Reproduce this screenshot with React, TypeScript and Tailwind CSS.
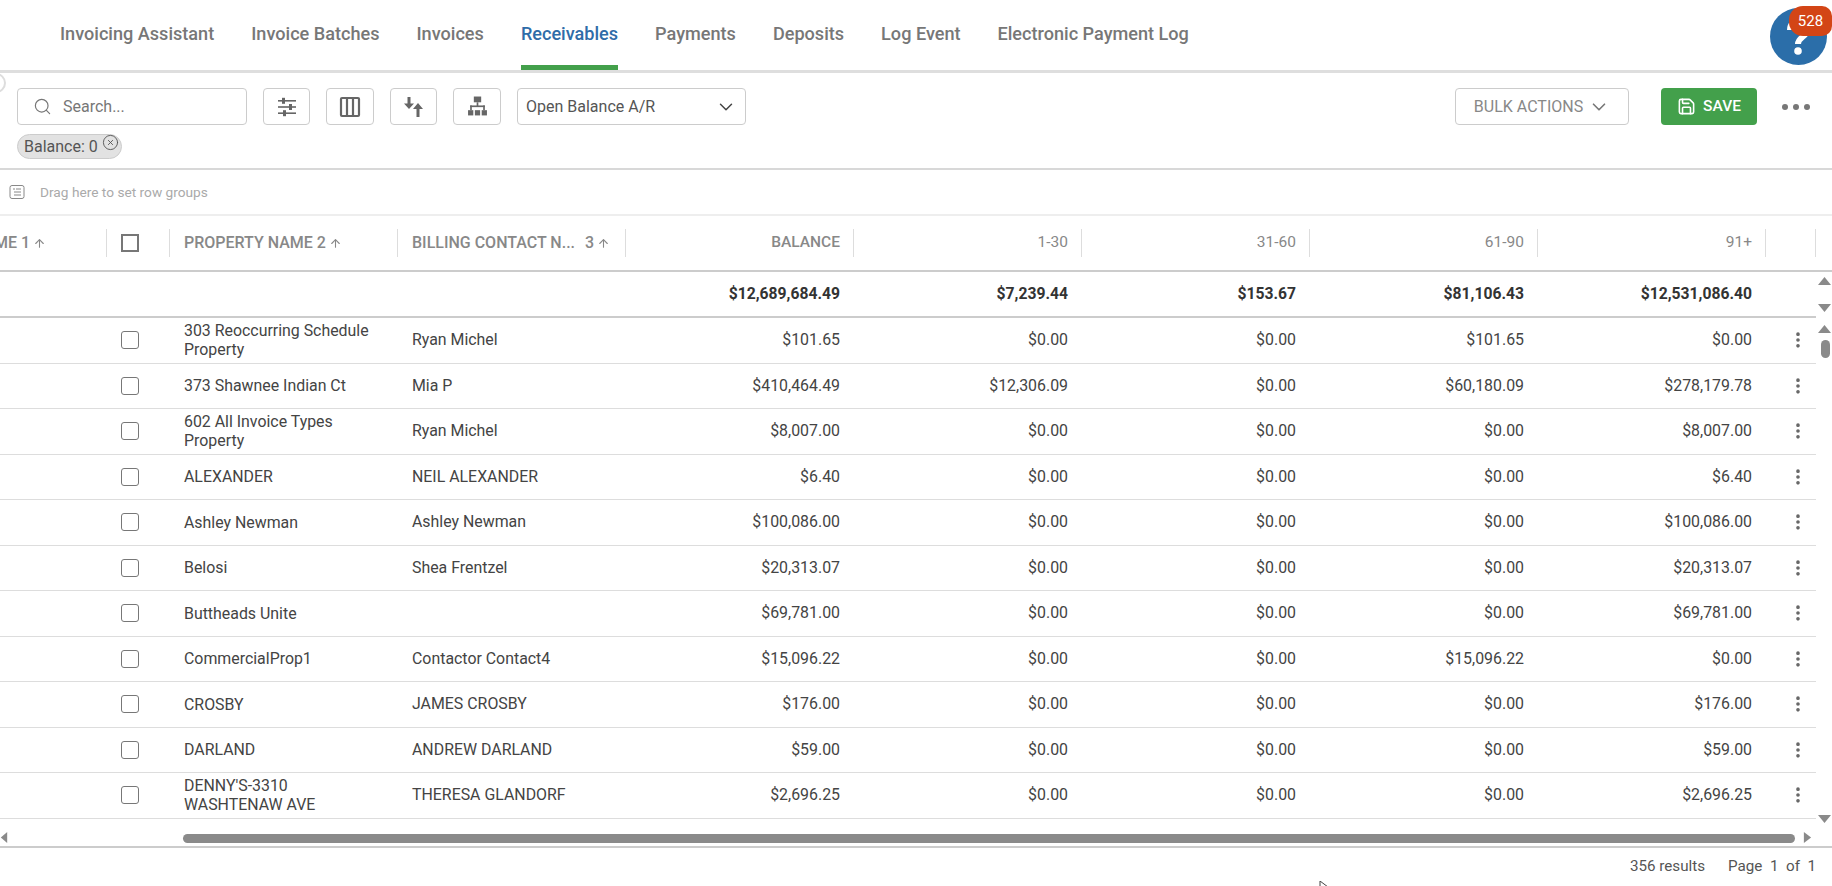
import { ArrowUp, ChevronDown, EllipsisVertical, Save, Search, CircleX } from "lucide-react";

const tabs = ["Invoicing Assistant", "Invoice Batches", "Invoices", "Receivables", "Payments", "Deposits", "Log Event", "Electronic Payment Log"];

const rows = [
  ["303 Reoccurring Schedule Property", "Ryan Michel", "$101.65", "$0.00", "$0.00", "$101.65", "$0.00"],
  ["373 Shawnee Indian Ct", "Mia P", "$410,464.49", "$12,306.09", "$0.00", "$60,180.09", "$278,179.78"],
  ["602 All Invoice Types Property", "Ryan Michel", "$8,007.00", "$0.00", "$0.00", "$0.00", "$8,007.00"],
  ["ALEXANDER", "NEIL ALEXANDER", "$6.40", "$0.00", "$0.00", "$0.00", "$6.40"],
  ["Ashley Newman", "Ashley Newman", "$100,086.00", "$0.00", "$0.00", "$0.00", "$100,086.00"],
  ["Belosi", "Shea Frentzel", "$20,313.07", "$0.00", "$0.00", "$0.00", "$20,313.07"],
  ["Buttheads Unite", "", "$69,781.00", "$0.00", "$0.00", "$0.00", "$69,781.00"],
  ["CommercialProp1", "Contactor Contact4", "$15,096.22", "$0.00", "$0.00", "$15,096.22", "$0.00"],
  ["CROSBY", "JAMES CROSBY", "$176.00", "$0.00", "$0.00", "$0.00", "$176.00"],
  ["DARLAND", "ANDREW DARLAND", "$59.00", "$0.00", "$0.00", "$0.00", "$59.00"],
  ["DENNY'S-3310 WASHTENAW AVE", "THERESA GLANDORF", "$2,696.25", "$0.00", "$0.00", "$0.00", "$2,696.25"],
];

const totals = ["$12,689,684.49", "$7,239.44", "$153.67", "$81,106.43", "$12,531,086.40"];
const amountHeads = ["BALANCE", "1-30", "31-60", "61-90", "91+"];

function Tri({ dir, className }: { dir: "up" | "down" | "left" | "right"; className: string }) {
  const pts = { up: "5,1 10,9 0,9", down: "0,1 10,1 5,9", left: "9,0 9,10 1,5", right: "1,0 1,10 9,5" }[dir];
  return (
    <svg viewBox="0 0 10 10" preserveAspectRatio="none" className={className} fill="#8a8a8a">
      <polygon points={pts} />
    </svg>
  );
}

function SlidersIcon() {
  return (
    <svg viewBox="0 0 22 22" className="w-[22px] h-[22px]" fill="#666">
      <rect x="2" y="4" width="18" height="1.6" />
      <rect x="6" y="1.8" width="3" height="6" />
      <rect x="2" y="10.2" width="18" height="1.6" />
      <rect x="13" y="8" width="3" height="6" />
      <rect x="2" y="16.4" width="18" height="1.6" />
      <rect x="7" y="14.2" width="3" height="6" />
    </svg>
  );
}

function ColumnsIcon() {
  return (
    <svg viewBox="0 0 22 22" className="w-[22px] h-[22px]" fill="none" stroke="#666" strokeWidth="2.2">
      <rect x="2" y="2" width="18" height="18" rx="1" />
      <path d="M8 2v18M14 2v18" />
    </svg>
  );
}

function SortIcon() {
  return (
    <svg viewBox="0 0 22 22" className="w-[22px] h-[22px]" fill="#666">
      <path d="M4.5 1h3v6.5H11L6 13 1 7.5h3.5z" />
      <path d="M16.5 21h-3v-8H10l5-6 5 6h-3.5z" />
    </svg>
  );
}

function HierarchyIcon() {
  return (
    <svg viewBox="0 0 20 20" className="w-[21px] h-[21px]" fill="#666">
      <rect x="6.5" y="0.5" width="7" height="5.5" />
      <rect x="9.2" y="6" width="1.6" height="4" />
      <rect x="3" y="9" width="14" height="1.6" />
      <rect x="3" y="9" width="1.6" height="4.5" />
      <rect x="15.4" y="9" width="1.6" height="4.5" />
      <rect x="1" y="13.5" width="5" height="5" />
      <rect x="7.5" y="13.5" width="5" height="5" />
      <rect x="14" y="13.5" width="5" height="5" />
    </svg>
  );
}

function ToolBtn({ children, w }: { children: React.ReactNode; w: string }) {
  return <button className={`${w} h-[37px] border border-[#ccc] rounded flex items-center justify-center bg-white`}>{children}</button>;
}

export default function App() {
  return (
    <div className="w-[1832px] h-[886px] overflow-hidden relative bg-white text-[#444]" style={{ fontFamily: "Roboto, sans-serif" }}>
      <div className="h-[73px] flex pl-[60px] gap-[37px] border-b-[3px] border-[#dedede]">
        {tabs.map((t) => (
          <div key={t} className={`pt-[22px] text-[18.1px] font-medium leading-[24px] whitespace-nowrap ${t === "Receivables" ? "text-[#2f6ca8] border-b-[5px] border-[#43a04b] h-[70px]" : "text-[#777] h-[70px]"}`}>
            {t}
          </div>
        ))}
      </div>

      {/* help bubble */}
      <svg viewBox="0 0 57 57" className="absolute left-[1770px] top-[8px] w-[57px] h-[57px]">
        <circle cx="28.5" cy="28.5" r="28.5" fill="#2b6ea9" />
        <path d="M20 22C20 10 37 10 37 22C37 29 28 29 28 36" fill="none" stroke="#fff" strokeWidth="6" />
        <circle cx="28" cy="43" r="3.8" fill="#fff" />
      </svg>
      <div className="absolute left-[1789px] top-[6px] w-[43px] h-[30px] rounded-l-[14px] rounded-r-[10px] bg-[#d34516] text-white text-[15px] flex items-center justify-center">528</div>

      <div className="h-[97px] border-b-2 border-[#d8d8d8] pl-[17px] pr-[22px] pt-[15px] relative">
        <div className="flex items-center h-[37px]">
          <div className="w-[230px] h-[37px] border border-[#ccc] rounded flex items-center pl-[15px] gap-[11px] text-[16px] text-[#777]">
            <Search size={19} strokeWidth={1.5} />
            Search...
          </div>
          <div className="flex gap-[16px] ml-[16px]">
            <ToolBtn w="w-[47px]"><SlidersIcon /></ToolBtn>
            <ToolBtn w="w-[48px]"><ColumnsIcon /></ToolBtn>
            <ToolBtn w="w-[47px]"><SortIcon /></ToolBtn>
            <ToolBtn w="w-[48px]"><HierarchyIcon /></ToolBtn>
          </div>
          <div className="ml-[16px] w-[229px] h-[37px] border border-[#ccc] rounded flex items-center justify-between pl-[8px] pr-[8px] text-[16px] text-[#555]">
            Open Balance A/R
            <ChevronDown size={22} strokeWidth={1.6} color="#444" />
          </div>
          <div className="ml-auto flex items-center">
            <button className="w-[174px] h-[37px] border border-[#ccc] rounded flex items-center justify-center gap-[5px] text-[16px] text-[#888]">
              BULK ACTIONS
              <ChevronDown size={22} strokeWidth={1.8} color="#777" />
            </button>
            <button className="ml-[32px] w-[96px] h-[37px] rounded bg-[#43a04b] text-white flex items-center justify-center gap-[7px] text-[15.5px] font-medium">
              <Save size={19} />
              SAVE
            </button>
            <svg viewBox="0 0 28 6" className="ml-[25px] w-[28px] h-[6px]" fill="#777">
              <circle cx="3" cy="3" r="3" />
              <circle cx="14" cy="3" r="3" />
              <circle cx="25" cy="3" r="3" />
            </svg>
          </div>
        </div>
        <div className="mt-[9px] w-[105px] h-[25px] rounded-full bg-[#e2e2e2] border border-[#ccc] flex items-center pl-[6px] text-[16px] text-[#555] relative whitespace-nowrap">
          Balance: 0
          <CircleX size={17} strokeWidth={1.3} className="absolute left-[84px] top-[-1px]" />
        </div>
      </div>
      <div className="absolute left-[-14px] top-[73px] w-[20px] h-[20px] rounded-full bg-white border-2 border-[#ddd]" />

      <div className="h-[46px] border-b-2 border-[#eee] flex items-center pl-[9px] gap-[15px] text-[13.7px] text-[#aaa]">
        <svg viewBox="0 0 16 16" className="w-[16px] h-[16px]" fill="none" stroke="#888" strokeWidth="1">
          <rect x="1" y="1.5" width="14" height="13" rx="2" />
          <path d="M4 5h2M7 5h5M5 8h7M5 11h7" />
        </svg>
        Drag here to set row groups
      </div>

      <div className="h-[56px] border-b-2 border-[#ccc] flex items-center text-[16px] font-medium text-[#888] whitespace-nowrap">
        <div className="w-[107px] h-[28px] border-r border-[#ddd] flex items-center justify-end pr-[60px] overflow-hidden">
          ME 1<ArrowUp size={13} className="ml-[3px] shrink-0" />
        </div>
        <div className="w-[63px] h-[28px] border-r border-[#ddd] flex items-center pl-[14px]">
          <div className="w-[18px] h-[18px] border-2 border-[#777]" />
        </div>
        <div className="w-[228px] h-[28px] border-r border-[#ddd] flex items-center pl-[14px]">
          PROPERTY NAME 2<ArrowUp size={13} className="ml-[3px] shrink-0" />
        </div>
        <div className="w-[228px] h-[28px] border-r border-[#ddd] flex items-center pl-[14px]">
          BILLING CONTACT N...<span className="ml-[10px]">3</span><ArrowUp size={13} className="ml-[3px] shrink-0" />
        </div>
        {amountHeads.map((h, i) => (
          <div key={h} className={`w-[228px] h-[28px] border-r border-[#ddd] flex items-center justify-end pr-[13px] text-[15.5px] ${i > 0 ? "font-normal" : ""}`}>
            {h}
          </div>
        ))}
        <div className="w-[50px] h-[28px] border-r border-[#ddd]" />
      </div>

      <div className="h-[46px] relative">
        <div className="w-[1816px] h-[46px] border-b-2 border-[#ccc] flex items-center text-[15.7px] font-bold text-[#333]">
          <div className="w-[625px] shrink-0" />
          {totals.map((t) => (
            <div key={t} className="w-[228px] text-right pr-[13px]">{t}</div>
          ))}
        </div>
        <div className="absolute right-0 top-0 bottom-0 w-[16px] flex flex-col justify-between items-center pt-[4px] pb-[5px]">
          <Tri dir="up" className="w-[13px] h-[10px]" />
          <Tri dir="down" className="w-[13px] h-[10px]" />
        </div>
      </div>

      <div className="relative">
        {rows.map((r) => (
          <div key={r[0]} className="h-[45.5px] w-[1816px] border-b border-[#ddd] flex items-center text-[15.9px] text-[#444]">
            <div className="w-[107px]" />
            <div className="w-[63px] pl-[14px]">
              <div className="w-[18px] h-[18px] border-[1.5px] border-[#777] rounded-[3px]" />
            </div>
            <div className="w-[228px] pl-[14px] pr-[10px] leading-[19px]">{r[0]}</div>
            <div className="w-[228px] pl-[14px]">{r[1]}</div>
            {r.slice(2).map((v, i) => (
              <div key={i} className="w-[228px] text-right pr-[14px]">{v}</div>
            ))}
            <div className="w-[50px] flex justify-end pr-[8px]">
              <EllipsisVertical size={20} color="#666" strokeWidth={2.4} />
            </div>
          </div>
        ))}
        <div className="absolute right-0 top-0 w-[16px] h-[506px] flex flex-col justify-between items-center pt-[6px]">
          <Tri dir="up" className="w-[13px] h-[10px]" />
          <Tri dir="down" className="w-[13px] h-[10px]" />
        </div>
        <div className="absolute right-[2px] top-[22px] w-[9px] h-[18px] rounded-full bg-[#8a8a8a]" />
      </div>

      <div className="h-[29px] border-b-2 border-[#ccc] flex items-end pb-[3px] relative">
        <Tri dir="left" className="absolute left-0 bottom-[3px] w-[8px] h-[11px]" />
        <div className="ml-[183px] w-[1612px] h-[9px] rounded-full bg-[#8a8a8a]" />
        <Tri dir="right" className="ml-[8px] w-[9px] h-[11px]" />
      </div>

      <div className="h-[38px] flex items-center justify-end pr-[16px] text-[15.2px] text-[#555] whitespace-pre">
        <span className="mr-[23px]">356 results</span>
        <span>Page  1  of  1</span>
      </div>
      <svg viewBox="0 0 10 10" className="absolute left-[1319px] top-[881px] w-[10px] h-[10px]" fill="none" stroke="#444">
        <path d="M1 0v9l3-3h5z" />
      </svg>
    </div>
  );
}
